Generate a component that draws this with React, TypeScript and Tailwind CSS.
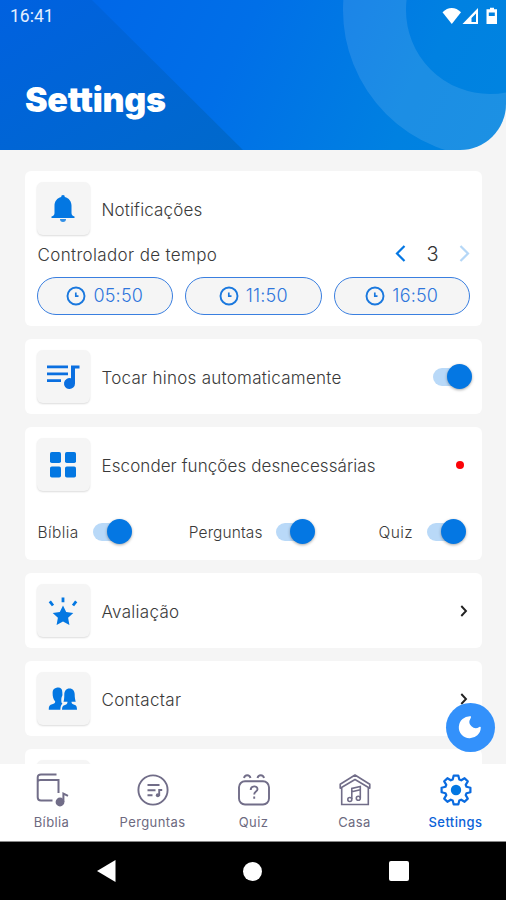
import type { ReactNode } from 'react'
import clsx from 'clsx'

const times = ['05:50', '11:50', '16:50']

function BellIcon() {
  return (
    <svg width="24" height="30" viewBox="0 0 24 30" fill="#0377e2">
      <path d="M12 1a1.8 1.8 0 0 1 1.8 2C18 4 20.500 7.500 20.500 11.500V19c0 2 1 3 3 3.600V24H.5v-1.400c2-.6 3-1.600 3-3.600v-7.500C3.500 7.500 6 4 10.200 3A1.800 1.800 0 0 1 12 1z" />
      <path d="M9 25h6a3 3 0 0 1-6 0z" opacity=".8" />
    </svg>
  )
}

function PlaylistIcon() {
  return (
    <svg width="34" height="26" viewBox="0 0 34 26" fill="#0a6fe0">
      <path d="M1 1.500h21v2.800H1zM1 8.500h21v2.800H1zM1 15.300h14v2.800H1z" />
      <path d="M25 1.500h8.500v3h-4.500V19.500a5.500 5.500 0 1 1-4-5.200z" />
    </svg>
  )
}

function GridIcon() {
  return (
    <svg width="26" height="26" viewBox="0 0 26 26" fill="#0377e2">
      <rect width="11" height="11" rx="1.800" />
      <rect x="15" width="11" height="11" rx="1.800" />
      <rect y="14.500" width="11" height="11" rx="1.800" />
      <rect x="15" y="14.500" width="11" height="11" rx="1.800" />
    </svg>
  )
}

function StarIcon() {
  return (
    <svg width="30" height="30" viewBox="0 0 30 30" fill="#0377e2">
      <path d="M15 9.500l3.200 6.400 7.100 1-5.200 4.900 1.300 7.200-6.400-3.400L8.600 29l1.300-7.200-5.200-4.900 7.100-1z" />
      <path d="M15 1.500v4.800M1.800 5.300l3.200 4.200M28.200 5.300l-3.200 4.200" stroke="#0377e2" strokeWidth="2.800" />
    </svg>
  )
}

function PeopleIcon() {
  return (
    <svg width="30" height="24" viewBox="0 0 30 24" fill="#0377e2">
      <path d="M8.500.8C12.200-.1 14.300 1.800 14.300 5c0 1.500.4 2.800-.1 4-.9 1-1.100 4.200-.7 6.500l.9 1.200c-1.500 1.200-2 3.300-2 6.100H.8c-.2-3.600.8-4.900 3.400-5.600 2-.5 3-1.200 3-2.700C5.300 12.500 4.600 9.500 4.600 6c0-2.800 1-4.600 3.900-5.200z" />
      <path d="M21.500 1.500c3.500 0 5.200 2.700 5.200 6 0 3 .5 5.500 1 7.300h-4.200c0 2 1 2.500 2.800 3 2 .6 2.700 2 2.700 5H14c0-3 .8-4.200 3-4.800 1.600-.5 2.500-1.200 2.500-3.200h-4c.6-2 .8-4.300.8-7.300 0-3.300 1.700-6 5.200-6z" />
    </svg>
  )
}

function ClockIcon() {
  return (
    <svg width="20" height="20" viewBox="0 0 20 20" fill="none" stroke="#1a78de" strokeWidth="1.900">
      <circle cx="10" cy="10" r="8.500" />
      <path d="M9.800 6.500v3.700h2.700" strokeWidth="1.700" />
    </svg>
  )
}

function IconTile({ children }: { children?: ReactNode }) {
  return (
    <div className="flex h-[53px] w-[53px] shrink-0 items-center justify-center rounded-md bg-[#f5f5f5] shadow-[0_1px_2px_rgba(0,0,0,0.14)]">
      {children}
    </div>
  )
}

function Toggle() {
  return (
    <div className="relative h-[18px] w-[39px]">
      <div className="h-[18px] w-[36px] rounded-full bg-[#b9d9f8]" />
      <div className="absolute -top-[4px] right-0 h-[25px] w-[25px] rounded-full bg-[#0477e3] shadow-[0_1px_3px_rgba(0,0,0,0.35)]" />
    </div>
  )
}

function Chevron() {
  return (
    <svg width="8" height="12" viewBox="0 0 8 12" fill="none" stroke="#222" strokeWidth="1.900">
      <path d="M1.300 1l4.700 5-4.700 5" />
    </svg>
  )
}

function Row({ icon, label, children }: { icon?: ReactNode; label: ReactNode; children?: ReactNode }) {
  return (
    <div className="flex h-[53px] items-center">
      <IconTile>{icon}</IconTile>
      <div className="ml-3 flex-1 pt-[2px]">{label}</div>
      {children}
    </div>
  )
}

const label = 'block whitespace-nowrap text-[17px] font-light leading-6 text-[#3a3a3a]'
const card = 'shrink-0 rounded-md bg-white pr-3 pl-[11.5px] pt-[11px]'

function Header() {
  return (
    <header className="relative h-[150px] shrink-0 overflow-hidden rounded-br-[46px] bg-[linear-gradient(115deg,#0063e8_0%,#006fe8_45%,#0081e1_80%,#0084e0_100%)]">
      <svg className="absolute inset-0" width="506" height="150" viewBox="0 0 506 150">
        <defs>
          <linearGradient id="fold" x1="0" y1="0" x2="1" y2="1">
            <stop offset="0" stopColor="#0061e0" />
            <stop offset="1" stopColor="#0069cb" />
          </linearGradient>
        </defs>
        <path d="M0 0h92l151 150H0z" fill="url(#fold)" />
        <circle cx="490" cy="10" r="115.500" fill="none" stroke="#fff" strokeOpacity=".11" strokeWidth="63" />
      </svg>
      <div className="relative flex h-8 items-center justify-between pr-[7px] pl-[10px]">
        <span className="font-[Roboto] text-[17.500px] text-[#e4efff]">16:41</span>
        <svg width="57" height="18" viewBox="0 0 57 18" fill="#fff">
          <path d="M.5 5.200C6-.5 13.500-.5 19 5.200L9.800 17z" />
          <path d="M36 1v16H20.500zM34 6.500L29.500 11v4H34z" fillRule="evenodd" />
          <path d="M48 .8h4v1.500h3V17H44.500V2.300H48zM46.800 5.500V9h6V5.500z" fillRule="evenodd" />
        </svg>
      </div>
      <h1 className="relative mt-[47px] ml-[25px] text-[34px] leading-[42px] font-black tracking-[-0.300px] text-white">
        Settings
      </h1>
    </header>
  )
}

function BookIcon() {
  return (
    <svg width="34" height="36" viewBox="0 0 34 36" fill="none" stroke="#716d88" strokeWidth="2">
      <path d="M21.500 2.500H6c-2.200 0-3.300 1.200-3.300 3v19.800c0 2.200 1.100 3.200 3.300 3.200h11.500M2.700 9.800C2.700 8.600 4 8 5.500 8h18v13" />
      <circle cx="25" cy="30" r="3.400" fill="#716d88" />
      <path d="M28.400 30v-8.500l4.600 2.300" />
    </svg>
  )
}

function QuestionsIcon() {
  return (
    <svg width="32" height="32" viewBox="0 0 32 32" fill="none" stroke="#716d88" strokeWidth="1.900">
      <circle cx="16" cy="16" r="14.600" />
      <path d="M10.500 11h12M10.500 16.200h8M10.500 21.300h5" />
      <path d="M22.200 22v-6h3" strokeWidth="1.900" />
      <circle cx="20.800" cy="21.300" r="2" fill="#716d88" stroke="none" />
    </svg>
  )
}

function QuizIcon() {
  return (
    <svg width="34" height="34" viewBox="0 0 34 34" fill="none" stroke="#716d88" strokeWidth="1.900">
      <rect x="2" y="8.200" width="30" height="23.300" rx="6" />
      <path d="M7 5c.8-3.700 5.700-3.700 6.500 0M20.500 5c.8-3.700 5.700-3.700 6.500 0" />
      <path d="M13.700 17c0-4.700 6.800-4.700 6.800-.8 0 2.500-3.300 2.300-3.300 5.300M17.200 23.500v2.300" />
    </svg>
  )
}

function HouseIcon() {
  return (
    <svg width="34" height="34" viewBox="0 0 34 34" fill="none" stroke="#716d88" strokeWidth="1.600">
      <path d="M17 2l14.800 9.200v4L17 6.500 2.200 15.200v-4z" strokeLinejoin="round" />
      <path d="M3.700 15v16.500h26.600V15" />
      <path d="M13.800 26V15.500l8.500-2V25M13.800 18.800l8.500-2" />
      <circle cx="11.800" cy="26.500" r="2" />
      <circle cx="20.300" cy="25.300" r="2" />
    </svg>
  )
}

function GearIcon() {
  return (
    <svg width="34" height="34" viewBox="-17 -17 34 34" fill="none" stroke="#0a6be0" strokeWidth="2.200" strokeLinejoin="round">
      <path d="M-2.300-14.400H2.300L3.300-10.500 5.200-9.700 8.600-11.800 11.800-8.600 9.700-5.200 10.500-3.300 14.400-2.300V2.300L10.500 3.300 9.700 5.200 11.800 8.600 8.600 11.800 5.200 9.700 3.300 10.500 2.300 14.400H-2.300L-3.300 10.500-5.200 9.700-8.600 11.800-11.800 8.600-9.700 5.200-10.500 3.300-14.400 2.300V-2.300L-10.500-3.300-9.700-5.200-11.800-8.600-8.600-11.800-5.200-9.700-3.300-10.500z" />
      <circle r="5.200" fill="#0377e2" stroke="none" />
    </svg>
  )
}

const tabs = [
  { name: 'Bíblia', icon: <BookIcon /> },
  { name: 'Perguntas', icon: <QuestionsIcon /> },
  { name: 'Quiz', icon: <QuizIcon /> },
  { name: 'Casa', icon: <HouseIcon /> },
  { name: 'Settings', icon: <GearIcon />, active: true },
]

export default function App() {
  return (
    <div className="flex h-[900px] w-[506px] flex-col overflow-hidden bg-[#f5f5f5] font-[Inter,sans-serif]">
      <Header />

      <main className="relative flex h-[614px] shrink-0 flex-col gap-[13px] overflow-hidden pt-[21px] pr-6 pl-[25px]">
        <section className={clsx(card, 'h-[155px]')}>
          <Row icon={<BellIcon />} label={<span className={clsx(label, 'tracking-[0.150px]')}>Notificações</span>} />
          <div className="mt-[8px] flex h-6 items-center">
            <span className={clsx(label, 'pl-px tracking-[0.350px]')}>Controlador de tempo</span>
            <div className="-mt-[3px] ml-auto flex items-center">
              <svg width="11" height="17" viewBox="0 0 11 17" fill="none" stroke="#0477e3" strokeWidth="2.200">
                <path d="M9.500 1L2 8.500 9.500 16" />
              </svg>
              <span className="w-[53px] text-center text-xl font-light text-[#333]">3</span>
              <svg width="11" height="17" viewBox="0 0 11 17" fill="none" stroke="#b5d7f7" strokeWidth="2.200">
                <path d="M1.500 1L9 8.500 1.500 16" />
              </svg>
            </div>
          </div>
          <div className="mt-[9.500px] flex gap-3">
            {times.map((time) => (
              <div
                key={time}
                className="flex h-[38px] flex-1 items-center justify-center gap-[7px] rounded-full border-[1.500px] border-[#3a7fe0] bg-[#f5f5f5]"
              >
                <ClockIcon />
                <span className="text-[18px] font-light tracking-[0.200px] text-[#2f76dc]">{time}</span>
              </div>
            ))}
          </div>
        </section>

        <section className={clsx(card, 'h-[75px]')}>
          <Row
            icon={<PlaylistIcon />}
            label={<span className={clsx(label, 'tracking-[0.260px]')}>Tocar hinos automaticamente</span>}
          >
            <div className="-mr-[2px]">
              <Toggle />
            </div>
          </Row>
        </section>

        <section className={clsx(card, 'h-[133px]')}>
          <Row
            icon={<GridIcon />}
            label={<span className={clsx(label, 'tracking-[0.080px]')}>Esconder funções desnecessárias</span>}
          >
            <span className="mr-[6.500px] h-2 w-2 rounded-full bg-[#fb0207]" />
          </Row>
          <div className="mt-[29px] flex h-6 items-center pr-1 pl-px">
            {[
              { name: 'Bíblia', style: 'tracking-[0.400px]' },
              { name: 'Perguntas', style: 'ml-auto mr-[63px] tracking-[0.100px]' },
              { name: 'Quiz', style: 'tracking-[0.400px]' },
            ].map((item) => (
              <div key={item.name} className={clsx('flex items-center gap-[14px]', item.style)}>
                <span className="pt-[2px] text-[15.500px] font-light text-[#3a3a3a]">{item.name}</span>
                <Toggle />
              </div>
            ))}
          </div>
        </section>

        {[
          { name: 'Avaliação', icon: <StarIcon /> },
          { name: 'Contactar', icon: <PeopleIcon /> },
        ].map((item) => (
          <section key={item.name} className={clsx(card, 'h-[75px]')}>
            <Row icon={item.icon} label={<span className={clsx(label, 'tracking-[0.300px]')}>{item.name}</span>}>
              <span className="mr-[2px]">
                <Chevron />
              </span>
            </Row>
          </section>
        ))}

        <section className={clsx(card, 'h-[75px]')}>
          <IconTile />
        </section>

        <button className="absolute top-[552.500px] right-[11.500px] flex h-[49px] w-[49px] items-center justify-center rounded-full bg-[#3391fb]">
          <svg width="24" height="24" viewBox="0 0 24 24" fill="#fff">
            <path d="M12.600 1.300A11 11 0 1 0 22.800 12.500c0-.9-.8-1-1.500-.5a6.300 6.300 0 0 1-8.800-8.600c.5-.9.900-2.100.1-2.100z" />
          </svg>
        </button>
      </main>

      <nav className="grid h-[78px] shrink-0 grid-cols-5 border-b border-[#888] bg-white pl-px">
        {tabs.map((tab) => (
          <div key={tab.name} className="flex flex-col items-center">
            <div className="mt-[8px] flex h-9 items-center justify-center">{tab.icon}</div>
            <span
              className={clsx(
                'mt-[5px] text-[13px] leading-[18px] tracking-[0.400px]',
                tab.active ? 'font-medium text-[#0a62d8]' : 'text-[#6d6a80]',
              )}
            >
              {tab.name}
            </span>
          </div>
        ))}
      </nav>

      <div className="flex flex-1 items-center justify-center gap-[127px] bg-black">
        <svg width="19" height="22" viewBox="0 0 19 22" fill="#fff">
          <path d="M0 11L18.500 0v22z" />
        </svg>
        <span className="h-[19px] w-[19px] rounded-full bg-white" />
        <span className="h-[20px] w-[20px] rounded-[2px] bg-white" />
      </div>
    </div>
  )
}
